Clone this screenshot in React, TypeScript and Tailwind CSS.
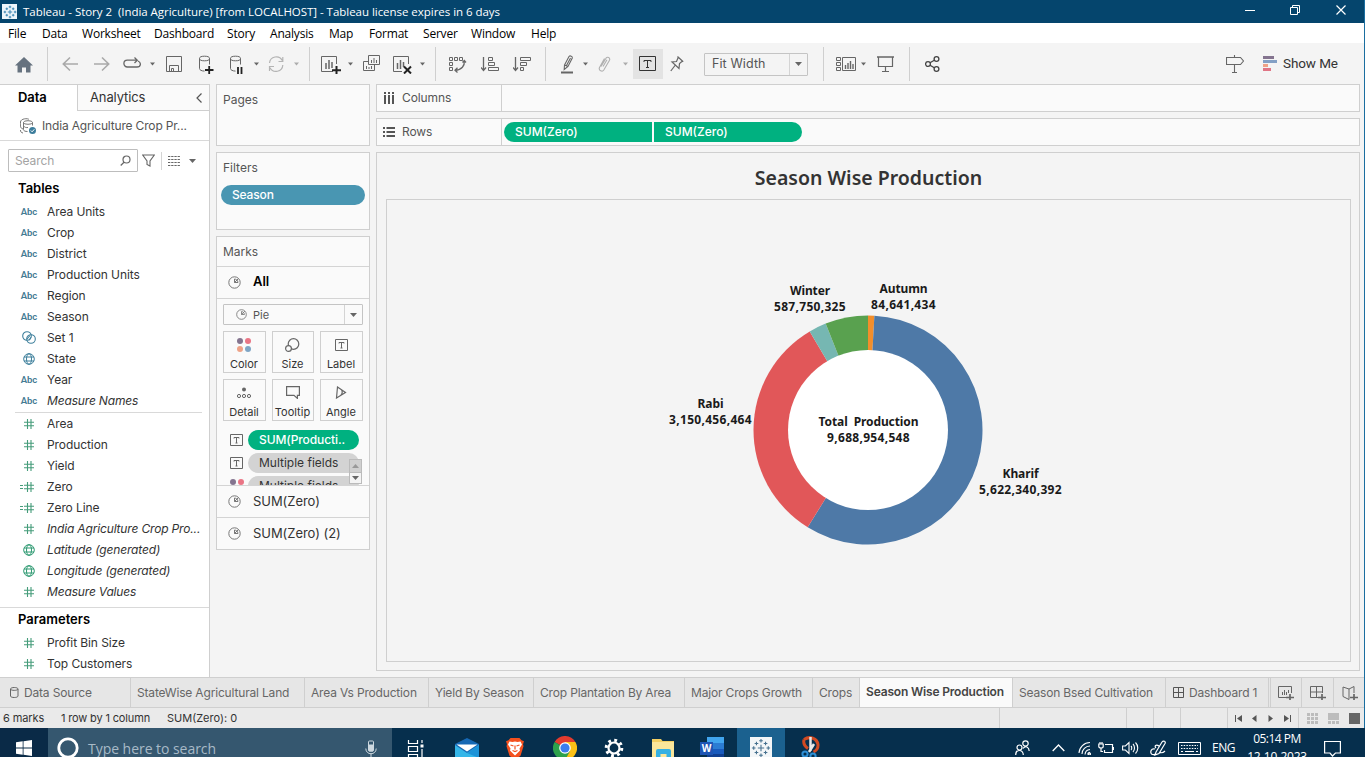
import React from "react";

type IconProps = { w: number; h?: number; className?: string; sw?: number; children: React.ReactNode };

function Icon({ w, h = 20, className = "", sw = 1, children }: IconProps) {
  return (
    <svg width={w} height={h} viewBox={`0 0 ${w} ${h}`} fill="none" stroke="currentColor" strokeWidth={sw} className={`block shrink-0 ${className}`}>
      {children}
    </svg>
  );
}

function Caret({ className = "" }: { className?: string }) {
  return (
    <Icon w={5} h={4} className={`text-[#666] ${className}`}>
      <path d="M0 .5h5L2.5 3.5z" fill="currentColor" stroke="none" />
    </Icon>
  );
}

function BigCaret() {
  return (
    <Icon w={7} h={4} className="text-[#666]">
      <path d="M0 0h7L3.5 4z" fill="currentColor" stroke="none" />
    </Icon>
  );
}

function Sep({ className = "" }: { className?: string }) {
  return <div className={`h-[34px] w-px shrink-0 bg-[#cfcfcf] ${className}`} />;
}

function TableauMark({ color, size, sw = 1.4 }: { color: string; size: number; sw?: number }) {
  return (
    <svg width={size} height={size} viewBox="0 0 22 22" fill="none" stroke={color} strokeWidth={sw} className="block shrink-0">
      <path d="M11 7.500v7M7.500 11h7M11 1v4M9 3h4M11 17v4M9 19h4M3 9v4M1 11h4M19 9v4M17 11h4M6 4v4M4 6h4M16 4v4M14 6h4M6 14v4M4 16h4M16 14v4M14 16h4" />
    </svg>
  );
}

function TitleBar() {
  return (
    <header className="flex h-[23px] items-center bg-[#05456d] pl-[2px] text-white">
      <div className="flex size-[15px] items-center justify-center bg-[#eef6fb]">
        <TableauMark color="#2f7fae" size={14} />
      </div>
      <span className="ml-[6px] whitespace-pre font-['Open_Sans',sans-serif] text-[11.500px] tracking-[-0.035px]">
        Tableau - Story 2  (India Agriculture) [from LOCALHOST] - Tableau license expires in 6 days
      </span>
      <div className="ml-auto flex items-center pb-[3px] pr-[19px]">
        <Icon w={10} h={10}><path d="M0 5.500h10" /></Icon>
        <Icon w={10} h={10} className="ml-[35px]"><path d="M.5 2.500h7v7h-7zM2.500 2.500v-2h7v7h-2" /></Icon>
        <Icon w={10} h={10} className="ml-[36px]" sw={1.2}><path d="M.5.5l9 9M9.500.5l-9 9" /></Icon>
      </div>
    </header>
  );
}

const menu: [string, string][] = [
  ["File", "w-[34px]"], ["Data", "w-[40px]"], ["Worksheet", "w-[72px]"], ["Dashboard", "w-[73px]"], ["Story", "w-[43px]"],
  ["Analysis", "w-[59px]"], ["Map", "w-[40px]"], ["Format", "w-[54px]"], ["Server", "w-[48px]"], ["Window", "w-[60px]"], ["Help", "w-[40px]"],
];

function MenuBar() {
  return (
    <nav className="flex h-[20px] items-center bg-white pl-[8px] pt-[2px] font-['Open_Sans',sans-serif] text-[12px] tracking-[-0.2px] text-black">
      {menu.map(([label, w]) => (
        <span key={label} className={`shrink-0 ${w}`}>{label}</span>
      ))}
    </nav>
  );
}

function Toolbar() {
  return (
    <div className="flex h-[41px] items-center pt-px text-[#666]">
      <Icon w={18} className="ml-[15px] text-[#66727f]">
        <path d="M9 3l9 8.500h-2.500V18.500h-4.500v-5h-4v5H2.500v-7H0z" fill="currentColor" stroke="none" />
      </Icon>
      <Sep className="ml-[14px]" />
      <Icon w={16} className="ml-[14px] text-[#a9a9a9]" sw={1.6}><path d="M16 10H1M8 3.500L1.300 10 8 16.500" /></Icon>
      <Icon w={16} className="ml-[16px] text-[#a9a9a9]" sw={1.6}><path d="M0 10h15M8 3.500l6.700 6.500L8 16.500" /></Icon>
      <Icon w={18} className="ml-[13px]" sw={1.3}>
        <path d="M10 13H4.300a3.400 3.400 0 0 1 0-6.800H14M11.500 3.500L14.300 6.200 11.500 9M15 7c3.500 1.500 3 6-1 6h-4" />
      </Icon>
      <Caret className="ml-[9px]" />
      <Icon w={16} className="ml-[11px]"><path d="M.5 2.500h15v15H.5zM3.500 17.500v-6h9v6M5.500 17.500v-3h2v3" /></Icon>
      <Icon w={15} className="ml-[17px]">
        <ellipse cx="5.500" cy="4.500" rx="5" ry="2.300" /><path d="M.5 4.500v10c0 1.500 2 2.500 5 2.600M10.500 4.500v6" />
        <path d="M6 16h8.500M10.200 12v8" stroke="#222" strokeWidth="1.800" />
      </Icon>
      <Icon w={14} className="ml-[16px]">
        <ellipse cx="5.500" cy="4.500" rx="5" ry="2.300" /><path d="M.5 4.500v10c0 1.500 2 2.500 5 2.600M10.500 4.500v6" />
        <path d="M8 13v7M11.500 13v7" stroke="#222" strokeWidth="1.800" />
      </Icon>
      <Caret className="ml-[10px]" />
      <Icon w={18} className="ml-[8px] text-[#b4b4b4]" sw={1.2}>
        <path d="M2.500 9a6.800 6.800 0 0 1 12.800-2.500M15.800 11A6.800 6.800 0 0 1 3 13.800M11.500 7.500h4.300V3M7 12.500H2.500V17" />
      </Icon>
      <Caret className="ml-[9px] opacity-50" />
      <Sep className="ml-[10px]" />
      <Icon w={20} className="ml-[11px]">
        <path d="M15.500 10V2.500H.5v15H12" /><path d="M5 9v6M8 6v9M11 8v6" strokeWidth="1.500" />
        <path d="M11 16.200h9M15.500 12v8" stroke="#222" strokeWidth="2" />
      </Icon>
      <Caret className="ml-[7px]" />
      <Icon w={17} className="ml-[10px]">
        <path d="M5.500 1.500h11v9h-11zM5 7.500H.5v9h11v-5.500" /><path d="M8.500 6v3M11 4v5M13.500 6v3M3.500 12v3M6 13v2M8.500 12v3" />
      </Icon>
      <Icon w={20} className="ml-[13px]">
        <path d="M15.500 10V2.500H.5v15H9" /><path d="M4.500 9v6M7.500 6v9M10.500 8v5" strokeWidth="1.500" />
        <path d="M11 12.500l7 7M18 12.500l-7 7" stroke="#222" strokeWidth="2" />
      </Icon>
      <Caret className="ml-[7px]" />
      <Sep className="ml-[10px]" />
      <Icon w={18} className="ml-[13px]">
        <path d="M.5 3.500h3v3h-3zM5.500 3.500h3v3h-3zM10.500 3.500h3v3h-3zM.5 8.500h3v3h-3zM.5 13.500h3v3h-3z" />
        <path d="M13.500 8.500l1.800-2 1.700 2M15.300 7c.5 4.500-2.500 9-9 9.200M8.500 13.800L6 16.200l2.500 2.300" strokeWidth="1.300" />
      </Icon>
      <Icon w={18} className="ml-[14px]">
        <path d="M2.500 3v13M0 13.500l2.500 3 2.500-3" strokeWidth="1.300" />
        <path d="M7.500 3.500h4v3h-4zM7.500 8.500h6v3h-6zM7.500 13.500h10v3h-10z" />
      </Icon>
      <Icon w={18} className="ml-[14px]">
        <path d="M2.500 3v13M0 13.500l2.500 3 2.500-3" strokeWidth="1.300" />
        <path d="M7.500 3.500h10v3h-10zM7.500 8.500h6v3h-6zM7.500 13.500h3v3h-3z" />
      </Icon>
      <Sep className="ml-[14px]" />
      <Icon w={14} className="ml-[15px]">
        <path d="M3.500 11L8 2.500c1-1.200 3.800-.2 3.300 1.500L7 12.500l-3.800 3zM3.500 11l3.500 1.500M5.500 11.500L9.500 4" strokeWidth="1.100" />
        <path d="M0 18.500h12" strokeWidth="2" />
      </Icon>
      <Caret className="ml-[8px]" />
      <Icon w={13} className="ml-[10px] text-[#b0b0b0]">
        <path d="M3 12.500l5-8.300c1.500-2 4.500-.3 3.500 2L5.800 16c-1.500 2.300-5.500.5-4.300-2.500L6.500 4.500M5 12.500l4-6.800" strokeWidth="1.100" />
      </Icon>
      <Caret className="ml-[12px] opacity-50" />
      <div className="ml-[5px] flex size-[30px] items-center justify-center bg-[#e3e3e3] pr-px">
        <Icon w={17} className="text-[#333]"><path d="M.5 2.500h16v14H.5z" /><path d="M5 8V6.500h7V8M8.500 6.500v7M7 13.500h3" /></Icon>
      </div>
      <Icon w={14} className="ml-[7px]" sw={1.2}>
        <path d="M7.500 2.500l5.700 5.200M8.300 3.200L6.500 7.500 2 8l7 6.500.5-5 3-2.500M5 11.500L.8 17" />
      </Icon>
      <div className="ml-[20px] flex h-[23px] w-[104px] shrink-0 items-center rounded-[1px] border border-[#c4c4c4]">
        <span className="w-[84px] pl-[7px] font-['Inter','Open_Sans',sans-serif] text-[12.500px] tracking-[0.1px] text-[#555]">Fit Width</span>
        <div className="flex h-full w-[18px] items-center justify-center border-l border-[#d4d4d4]"><BigCaret /></div>
      </div>
      <Sep className="ml-[15px]" />
      <Icon w={20} className="ml-[12px]">
        <path d="M.5 3.500h4v3h-4zM.5 8.500h4v3h-4zM.5 13.500h4v3h-4zM6.500 3.500h13v13h-13z" />
        <path d="M9.500 11v4M12 9v6M14.500 7v8M17 10v5" strokeWidth="1.400" />
      </Icon>
      <Caret className="ml-[5px]" />
      <Icon w={17} className="ml-[11px]"><path d="M0 3h17" strokeWidth="1.500" /><path d="M1.500 3v9.500h14V3M8.500 12.500v5M5 17.500h7" strokeWidth="1.200" /></Icon>
      <Sep className="ml-[15px]" />
      <Icon w={15} className="ml-[15px] text-[#444]" sw={1.3}>
        <circle cx="3" cy="10" r="2.400" /><circle cx="11.500" cy="5" r="2.400" /><circle cx="11.500" cy="15" r="2.400" /><path d="M5 8.800L9.300 6.200M5 11.200l4.300 2.600" />
      </Icon>
      <Icon w={18} className="ml-[286px]" sw={1.1}><path d="M8.500 1v2M.5 3.500h14l3 3.500-3 3.500H.5zM8.500 10.500v8M6 18.500h5" /></Icon>
      <Icon w={14} className="ml-[19px]">
        <g stroke="none"><path d="M0 2h11v3H0z" fill="#84748f" /><path d="M0 6h14v3H0z" fill="#83a0c5" /><path d="M0 10h5v3H0z" fill="#eea287" /><path d="M0 14h8v3H0z" fill="#e07585" /></g>
      </Icon>
      <span className="ml-[6px] whitespace-nowrap pb-[2px] font-['Roboto',sans-serif] text-[13.500px] tracking-[-0.1px] text-[#333]">Show Me</span>
    </div>
  );
}

type Kind = "abc" | "set" | "geo" | "num" | "calc";

function FieldIcon({ kind, green }: { kind: Kind; green?: boolean }) {
  const color = green ? "text-[#2f9a72]" : "text-[#3d7f9b]";
  if (kind === "abc") return <span className="pt-px font-['Roboto',sans-serif] text-[9.500px] font-semibold tracking-[-0.1px] text-[#447a93]">Abc</span>;
  if (kind === "set") return <Icon w={14} h={13} className={color} sw={1.1}><circle cx="5" cy="5" r="4.300" /><circle cx="9" cy="8" r="4.300" /><path d="M5 8l3-3.500M7 9.300l2-3" /></Icon>;
  if (kind === "geo") return <Icon w={12} h={12} className={color}><circle cx="6" cy="6" r="5.300" /><ellipse cx="6" cy="6" rx="2.500" ry="5.300" /><path d="M1 4h10M1 8h10" /></Icon>;
  return (
    <div className="relative">
      <Icon w={10} h={10} className="text-[#459c7a]" sw={1.1}><path d="M3.500 0v10M7 0v10M0 3.200h10M0 6.800h10" /></Icon>
      {kind === "calc" && <Icon w={3} h={4} className="absolute -left-[4px] top-[3px] text-[#459c7a]"><path d="M0 .5h3M0 3.500h3" /></Icon>}
    </div>
  );
}

function FieldRow({ kind, label, italic, green }: { kind: Kind; label: string; italic?: boolean; green?: boolean }) {
  return (
    <li className="flex h-[21px] items-center">
      <div className="flex w-[20px] shrink-0 justify-center"><FieldIcon kind={kind} green={green} /></div>
      <span className={`ml-[8px] whitespace-nowrap text-[12px] text-[#333] ${italic ? "italic tracking-[-0.16px]" : "tracking-[-0.08px]"}`}>{label}</span>
    </li>
  );
}

function DataPane() {
  return (
    <aside className="flex w-[210px] shrink-0 flex-col border-r border-t border-[#cfcfcf] bg-white">
      <div className="flex h-[26px] shrink-0">
        <div className="flex w-[77px] items-center pl-[18px] text-[13px] font-semibold tracking-[-0.1px] text-black">Data</div>
        <div className="flex flex-1 items-center border-b border-l border-[#cfcfcf] bg-[#fafafa] pl-[12px] text-[13px] tracking-[-0.12px] text-[#333]">
          Analytics
          <Icon w={6} h={10} className="ml-auto mr-[7px] text-[#555]" sw={1.2}><path d="M5.500.5L1 5l4.500 4.500" /></Icon>
        </div>
      </div>
      <div className="flex h-[30px] shrink-0 items-center border-b border-[#d9d9d9] pl-[20px]">
        <Icon w={16} h={16} className="text-[#777]">
          <path d="M3 11c-3-1-2.500-2.500-2.500-7C.5.500 8 0 9 1.500M3 15c-2-.5-2.500-1-2.500-3" /><ellipse cx="8" cy="4.500" rx="4.500" ry="1.800" /><path d="M3.500 4.500v7c0 1.500 2 2 4 2M12.500 4.500v3M3.500 8c1 1.500 3 1.800 4.500 1.500" />
          <circle cx="12.500" cy="12.500" r="3.500" fill="#3c7d9c" stroke="none" /><path d="M10.800 12.500l1.300 1.300 2.200-2.500" stroke="#fff" />
        </Icon>
        <span className="ml-[6px] text-[12px] tracking-[-0.17px] text-[#555]">India Agriculture Crop Pr...</span>
      </div>
      <div className="mt-[8px] flex h-[23px] shrink-0 items-center pl-[8px] text-[#666]">
        <div className="flex h-[23px] w-[130px] items-center justify-between rounded-[1px] border border-[#bdbdbd] pl-[6px] pr-[6px]">
          <span className="text-[12px] tracking-[-0.1px] text-[#a3a3a3]">Search</span>
          <Icon w={11} h={11} sw={1.200}><circle cx="6.500" cy="4.500" r="3.500" /><path d="M4 7.300L.7 10.500" /></Icon>
        </div>
        <Icon w={13} h={13} className="ml-[4px]" sw={1.1}><path d="M.7 1h11.600L8 7v5L5 10.500V7z" /></Icon>
        <div className="ml-[6px] h-[18px] w-px bg-[#d4d4d4]" />
        <Icon w={12} h={10} className="ml-[6px]"><path d="M0 .5h12M0 3.500h12M0 6.500h12M0 9.500h12" strokeDasharray="2.300 .9" /></Icon>
        <div className="ml-[9px]"><BigCaret /></div>
      </div>
      <h2 className="mt-[7px] pl-[18px] text-[13px] font-semibold leading-[19px] text-black">Tables</h2>
      <ul className="mt-[3px] pl-[19px]">
        <FieldRow kind="abc" label="Area Units" />
        <FieldRow kind="abc" label="Crop" />
        <FieldRow kind="abc" label="District" />
        <FieldRow kind="abc" label="Production Units" />
        <FieldRow kind="abc" label="Region" />
        <FieldRow kind="abc" label="Season" />
        <FieldRow kind="set" label="Set 1" />
        <FieldRow kind="geo" label="State" />
        <FieldRow kind="abc" label="Year" />
        <FieldRow kind="abc" label="Measure Names" italic />
      </ul>
      <div className="mx-[15px] mr-[7px] mt-px h-px shrink-0 bg-[#d9d9d9]" />
      <ul className="pl-[19px]">
        <FieldRow kind="num" label="Area" />
        <FieldRow kind="num" label="Production" />
        <FieldRow kind="num" label="Yield" />
        <FieldRow kind="calc" label="Zero" />
        <FieldRow kind="calc" label="Zero Line" />
        <FieldRow kind="num" label="India Agriculture Crop Pro..." italic />
        <FieldRow kind="geo" label="Latitude (generated)" italic green />
        <FieldRow kind="geo" label="Longitude (generated)" italic green />
        <FieldRow kind="num" label="Measure Values" italic />
      </ul>
      <div className="mt-[5px] h-px shrink-0 bg-[#d9d9d9]" />
      <h2 className="mt-[2px] pl-[18px] text-[13px] font-semibold leading-[19px] text-black">Parameters</h2>
      <ul className="mt-[3px] pl-[19px]">
        <FieldRow kind="num" label="Profit Bin Size" />
        <FieldRow kind="num" label="Top Customers" />
      </ul>
    </aside>
  );
}

function PieIcon({ size = 13 }: { size?: number }) {
  return (
    <svg width={size} height={size} viewBox="0 0 13 13" fill="none" stroke="#777" strokeWidth="1" className="block shrink-0">
      <circle cx="6.500" cy="6.500" r="5.700" /><path d="M6.500 3v3.500H10M6.500 6.500L10.500 2.500M6.500 3c1.800 0 3.300 1.500 3.500 3.500" />
    </svg>
  );
}

function TextIcon() {
  return <Icon w={13} h={12} className="text-[#666]"><path d="M.5.5h12v11H.5zM4 4.500V3.500h5v1M6.500 3.500v5.500M5.500 9h2" /></Icon>;
}

function MarkButton({ label, children }: { label: string; children: React.ReactNode }) {
  return (
    <div className="flex h-[42px] flex-col items-center border border-[#cfcfcf] pr-px pt-[4px]">
      <div className="flex h-[17px] items-center justify-center text-[#666]">{children}</div>
      <span className="mt-[4px] text-[11px] leading-[14px] text-[#333]">{label}</span>
    </div>
  );
}

function ColorDots() {
  return (
    <Icon w={14} h={14}>
      <g stroke="none"><circle cx="3" cy="3" r="3" fill="#84748f" /><circle cx="11" cy="3" r="3" fill="#ea7585" /><circle cx="3" cy="11" r="3" fill="#eea287" /><circle cx="11" cy="11" r="3" fill="#7fa5c5" /></g>
    </Icon>
  );
}

function BigCaretUp() {
  return <Icon w={7} h={4} className="text-[#999]"><path d="M0 4h7L3.500 0z" fill="currentColor" stroke="none" /></Icon>;
}

function Cards() {
  return (
    <section className="ml-[6px] flex w-[154px] shrink-0 flex-col gap-[6px] text-[12px] text-[#555]">
      <div className="h-[62px] border border-[#cfcfcf] bg-[#fafafa] pl-[6px] pt-[6px] leading-[17px]">Pages</div>
      <div className="h-[78px] border border-[#cfcfcf] bg-[#fafafa] px-[4px] pt-[6px] leading-[18px]">
        <div className="pl-[2px]">Filters</div>
        <div className="mt-[8px] flex h-[20px] items-center rounded-full bg-[#4996b2] pl-[11px] font-medium tracking-[-0.15px] text-white">Season</div>
      </div>
      <div className="flex h-[314px] flex-col border border-[#cfcfcf] bg-[#fafafa]">
        <div className="h-[30px] border-b border-[#d4d4d4] pl-[6px] pt-[6px] leading-[17px]">Marks</div>
        <div className="flex h-[32px] items-center border-b border-[#d4d4d4] pb-px pl-[11px] text-[13px] font-semibold text-black"><PieIcon /><span className="ml-[12px]">All</span></div>
        <div className="ml-[6px] mt-[5px] flex h-[21px] w-[140px] shrink-0 items-center rounded-[1px] border border-[#c4c4c4]">
          <div className="ml-[12px]"><PieIcon size={11} /></div>
          <span className="ml-[6px] pt-px text-[11px]">Pie</span>
          <div className="ml-auto flex h-full w-[18px] items-center justify-center border-l border-[#d4d4d4]"><BigCaret /></div>
        </div>
        <div className="ml-[6px] mt-[6px] grid w-[140px] grid-cols-[43px_42px_43px] gap-x-[6px] gap-y-[6px]">
          <MarkButton label="Color"><ColorDots /></MarkButton>
          <MarkButton label="Size"><Icon w={15} h={14} sw={1.2}><circle cx="8.500" cy="6" r="5.300" /><circle cx="3.500" cy="10.500" r="2.900" fill="#fafafa" /></Icon></MarkButton>
          <MarkButton label="Label"><TextIcon /></MarkButton>
          <MarkButton label="Detail"><Icon w={14} h={12}><circle cx="7" cy="2.500" r="2" fill="currentColor" stroke="none" /><circle cx="2" cy="9" r="1.600" /><circle cx="7" cy="9" r="1.600" /><circle cx="12" cy="9" r="1.600" /></Icon></MarkButton>
          <MarkButton label="Tooltip"><Icon w={14} h={13} sw={1.2}><path d="M.6.6h12.800v8.800h-2v3L8 9.400H.6z" /></Icon></MarkButton>
          <MarkButton label="Angle"><Icon w={12} h={13} sw={1.2}><path d="M2.500 1l8 5.500L1.500 12zM6.500 3.800c1 1.800.8 3.800-.5 5.200" /></Icon></MarkButton>
        </div>
        <div className="relative mt-[8px] flex h-[56px] shrink-0 flex-col gap-[3px] overflow-hidden pl-[13px] pt-px">
          <div className="flex h-[20px] shrink-0 items-center"><TextIcon /><div className="ml-[5px] flex h-[20px] w-[111px] items-center rounded-full bg-[#00b180] pl-[11px] font-medium tracking-[-0.1px] text-white">SUM(Producti..</div></div>
          <div className="flex h-[20px] shrink-0 items-center"><TextIcon /><div className="ml-[5px] flex h-[20px] w-[111px] items-center rounded-full bg-[#d3d3d3] pl-[11px] text-[#333]">Multiple fields</div></div>
          <div className="flex h-[20px] shrink-0 items-center"><div className="w-[13px]"><ColorDots /></div><div className="ml-[5px] flex h-[20px] w-[111px] items-center rounded-full bg-[#d3d3d3] pl-[11px] text-[#333]">Multiple fields</div></div>
          <div className="absolute bottom-px right-[7px] flex h-[25px] w-[13px] flex-col border border-[#bbb]">
            <div className="flex h-[12px] items-center justify-center bg-[#d0d0d0]"><BigCaretUp /></div>
            <div className="flex h-[11px] flex-1 items-center justify-center border-t border-[#bbb] bg-[#f4f4f4]"><BigCaret /></div>
          </div>
        </div>
        <div className="flex h-[32px] shrink-0 items-center border-t border-[#d4d4d4] pl-[11px] text-[13px] tracking-[-0.05px] text-[#333]"><PieIcon /><span className="ml-[12px]">SUM(Zero)</span></div>
        <div className="flex h-[32px] shrink-0 items-center border-t border-[#d4d4d4] pl-[11px] text-[13px] tracking-[-0.05px] text-[#333]"><PieIcon /><span className="ml-[12px]">SUM(Zero) (2)</span></div>
      </div>
    </section>
  );
}

const CX = 481;
const CY = 230;

const slices = [
  { from: 0, to: 3.2, color: "#f28e2b" },
  { from: 3.2, to: 211.8, color: "#4e79a7" },
  { from: 211.8, to: 329.4, color: "#e15759" },
  { from: 329.4, to: 338.3, color: "#76b7b2" },
  { from: 338.3, to: 360, color: "#59a14f" },
];

function wedge(from: number, to: number, r: number) {
  const p = (a: number) => `${CX + r * Math.sin((a * Math.PI) / 180)} ${CY - r * Math.cos((a * Math.PI) / 180)}`;
  return `M${CX} ${CY}L${p(from)}A${r} ${r} 0 ${to - from > 180 ? 1 : 0} 1 ${p(to)}Z`;
}

const labels: [string, string, number, number][] = [
  ["Winter", "587,750,325", 423, 95],
  ["Autumn", "84,641,434", 516.5, 93],
  ["Rabi", "3,150,456,464", 323.5, 208],
  ["Total\u00a0 Production", "9,688,954,548", 481.5, 226],
  ["Kharif", "5,622,340,392", 633.5, 278],
];

function Chart() {
  return (
    <svg width="963" height="461" viewBox="0 0 963 461" className="block">
      {slices.map((s) => <path key={s.color} d={wedge(s.from, s.to, 114.5)} fill={s.color} />)}
      <circle cx={CX} cy={CY} r="80" fill="#fff" />
      <g className="font-['Noto_Sans',sans-serif] text-[12px] font-bold" fill="#1a1a1a" textAnchor="middle">
        {labels.map(([name, value, x, y]) => (
          <React.Fragment key={name}>
            <text x={x} y={y} className="tracking-[-0.1px]">{name}</text>
            <text x={x} y={y + 16} className="tracking-[0.3px]">{value}</text>
          </React.Fragment>
        ))}
      </g>
    </svg>
  );
}

function Workspace() {
  return (
    <main className="ml-[6px] flex w-[984px] shrink-0 flex-col text-[12px] text-[#555]">
      <div className="flex h-[28px] border border-[#cfcfcf] bg-[#fafafa]">
        <div className="flex w-[125px] items-center border-r border-[#cfcfcf] pl-[7px]">
          <Icon w={11} h={12} className="text-[#555]" sw={2}><path d="M1 0v2M5 0v2M9 0v2M1 3v9M5 3v9M9 3v9" /></Icon>
          <span className="ml-[7px] tracking-[-0.1px]">Columns</span>
        </div>
      </div>
      <div className="mt-[6px] flex h-[28px] border border-[#cfcfcf] bg-[#fafafa]">
        <div className="flex w-[125px] items-center border-r border-[#cfcfcf] pl-[6px]">
          <Icon w={12} h={11} className="text-[#555]" sw={2}><path d="M0 1h2M0 5h2M0 9h2M3.500 1H12M3.500 5H12M3.500 9H12" /></Icon>
          <span className="ml-[7px] tracking-[-0.1px]">Rows</span>
        </div>
        <div className="ml-[2px] flex items-center gap-[2px] font-medium text-white">
          <div className="flex h-[20px] w-[148px] items-center rounded-l-full bg-[#00b180] pl-[11px]">SUM(Zero)</div>
          <div className="flex h-[20px] w-[148px] items-center rounded-r-full bg-[#00b180] pl-[11px]">SUM(Zero)</div>
        </div>
      </div>
      <div className="mt-[6px] flex h-[519px] flex-col border border-[#cfcfcf] pl-[9px] pr-[8px]">
        <h1 className="h-[46px] pt-[10px] text-center font-['Noto_Sans',sans-serif] text-[19.500px] font-semibold leading-[30px] text-[#333]">Season Wise Production</h1>
        <div className="h-[463px] border border-[#cfcfcf]"><Chart /></div>
      </div>
    </main>
  );
}

const sheets: { label: string; w: string; active?: boolean }[] = [
  { label: "StateWise Agricultural Land", w: "w-[174px]" },
  { label: "Area Vs Production", w: "w-[124px]" },
  { label: "Yield By Season", w: "w-[105px]" },
  { label: "Crop Plantation By Area", w: "w-[151px]" },
  { label: "Major Crops Growth", w: "w-[128px]" },
  { label: "Crops", w: "w-[47px]" },
  { label: "Season Wise Production", w: "w-[153px]", active: true },
  { label: "Season Bsed Cultivation", w: "w-[153px]" },
];

function SheetTabs() {
  return (
    <div className="flex h-[31px] shrink-0 border-y border-[#cfcfcf] bg-[#e6e6e6] text-[12px] tracking-[-0.17px] text-[#666]">
      <div className="flex w-[131px] shrink-0 items-center border-r border-[#cfcfcf] pl-[10px]">
        <Icon w={9} h={11}><path d="M.5 2v7c0 2 7.500 2 7.500 0V2C8 0 .5 0 .5 2zM.5 2c0 1.800 7.500 1.800 7.500 0" /></Icon>
        <span className="ml-[5px]">Data Source</span>
      </div>
      {sheets.map((s) => (
        <div key={s.label} className={`flex shrink-0 items-center whitespace-nowrap border-r border-[#cfcfcf] pl-[6px] ${s.w} ${s.active ? "bg-[#fafafa] pb-[2px] font-semibold text-[#444]" : ""}`}>{s.label}</div>
      ))}
      <div className="flex w-[103px] shrink-0 items-center border-r border-[#cfcfcf] pl-[7px]">
        <Icon w={11} h={11} className="text-[#555]"><path d="M.5.5h10v10H.5zM5.500.5v10M.5 5.500h10" /></Icon>
        <span className="ml-[5px]">Dashboard 1</span>
      </div>
      <div className="ml-px flex w-[32px] items-center justify-center border-x border-[#cfcfcf]">
        <Icon w={16} h={14}><path d="M13.500 7V.5H.5v11h8M4.500 6v3M6.500 4v5M8.500 6v3M10.500 4v3" /><path d="M8 11.500h8M12 8v6.500" strokeWidth="1.700" /></Icon>
      </div>
      <div className="flex w-[32px] items-center justify-center border-r border-[#cfcfcf]">
        <Icon w={16} h={14}><path d="M12.500 7V.5H.5v11h8M6.500.5v11M.5 6h12" /><path d="M8 11.500h8M12 8v6.500" strokeWidth="1.700" /></Icon>
      </div>
      <div className="flex flex-1 items-center justify-center">
        <Icon w={16} h={14}><path d="M7 13.500l-6-3V1l6 2 5-2.500V7M7 3v10.500" /><path d="M8 11.500h8M12 8v6.500" strokeWidth="1.700" /></Icon>
      </div>
    </div>
  );
}

function StatusBar() {
  return (
    <div className="flex h-[20px] shrink-0 items-center bg-[#eaeaea] pl-[3px] text-[11px] text-[#333]">
      <span className="w-[58px] tracking-[-0.1px]">6 marks</span>
      <span className="w-[106px] tracking-[-0.15px]">1 row by 1 column</span>
      <span>SUM(Zero): 0</span>
      <div className="ml-auto flex h-full shrink-0 text-[#555]">
        <div className="w-[127px] border-l border-[#cfcfcf]" />
        <div className="w-[27px] border-l border-[#cfcfcf]" />
        <div className="w-[27px] border-l border-[#cfcfcf]" />
        <div className="w-[47px] border-l border-[#cfcfcf]" />
        <div className="flex w-[71px] items-center gap-[10px] border-l border-[#cfcfcf] pl-[7px]">
          <Icon w={7} h={7}><path d="M.5 0v7" /><path d="M7 0v7L2 3.500z" fill="currentColor" stroke="none" /></Icon>
          <Icon w={5} h={7}><path d="M4.500 0v7L0 3.500z" fill="currentColor" stroke="none" /></Icon>
          <Icon w={5} h={7} className="ml-px"><path d="M.5 0v7L5 3.500z" fill="currentColor" stroke="none" /></Icon>
          <Icon w={7} h={7} className="ml-px"><path d="M6.500 0v7" /><path d="M0 0v7L5 3.500z" fill="currentColor" stroke="none" /></Icon>
        </div>
        <div className="flex w-[67px] items-center gap-[10px] border-l border-[#cfcfcf] pl-[8px]">
          <Icon w={11} h={11} className="text-[#bcbcbc]"><path d="M0 1.500h11M0 5.500h11M0 9.500h11" strokeWidth="3" strokeDasharray="3 1" /></Icon>
          <Icon w={11} h={11} className="text-[#bcbcbc]"><path d="M0 3.500h11" strokeWidth="7" /><path d="M0 9.500h11" strokeWidth="3" strokeDasharray="3 1" /></Icon>
          <Icon w={11} h={11} className="text-[#666]"><path d="M0 0h11v11H0z" fill="currentColor" stroke="none" /></Icon>
        </div>
      </div>
    </div>
  );
}

function Taskbar() {
  return (
    <footer className="h-[29px] shrink-0 overflow-hidden bg-[#062f4d]">
      <div className="flex h-[40px] items-center font-['Open_Sans',sans-serif] text-white">
        <div className="flex h-full w-[48px] shrink-0 items-center justify-center bg-[#0a2a47]">
          <Icon w={16} h={16}><path d="M0 2.300l6.700-1v6.300H0zM7.500 1.200L16 0v7.600H7.500zM0 8.400h6.700v6.300l-6.700-1zM7.500 8.400H16V16l-8.500-1.200z" fill="currentColor" stroke="none" /></Icon>
        </div>
        <div className="flex h-full w-[344px] shrink-0 items-center bg-[#35576f] pl-[9px]">
          <Icon w={22} h={22} sw={2.800}><circle cx="11" cy="11" r="9.200" /></Icon>
          <span className="ml-[9px] text-[14px] tracking-[-0.04px] text-[#a8bac7]">Type here to search</span>
          <Icon w={12} h={17} className="ml-auto mr-[15px] text-[#cdd8df]"><rect x="3.500" y="1" width="5" height="10" rx="1" /><path d="M4 5h4v6H4z" fill="currentColor" /><path d="M.8 8.500c0 7 10.400 7 10.400 0M6 13.500V17" /></Icon>
        </div>
        <Icon w={17} h={17} className="ml-[15px]" sw={1.2}><path d="M1.500 0v3.500h9V0M1.500 6.500h9v5h-9zM1.500 17v-2.500h9V17M15 0v3M15 9v8" /><path d="M13.500 4.500h3v3h-3z" fill="currentColor" stroke="none" /></Icon>
        <Icon w={24} h={20} className="ml-[31px]">
          <g stroke="none"><path d="M0 6l12-6 12 6v14H0z" fill="#1668b4" /><path d="M0 7l12 8L24 7v13H0z" fill="#35b6e9" /><path d="M12 15L24 7v13z" fill="#1c93d8" /><path d="M1.500 6.500h21L12 13.500z" fill="#fff" /></g>
        </Icon>
        <Icon w={20} h={23} className="ml-[26px]">
          <path d="M5.500 1h9l2 2.200 2.500 1-1 3 .5 2-3 9.500L10 23l-5.500-4.300L1.500 9.200l.5-2-1-3 2.500-1z" fill="#f4501e" stroke="none" />
          <path d="M10 4.500l2.500.5 3-.5 1.500 3-2.500 4 .5 2-5 5-5-5 .5-2L3 7.500l1.500-3 3 .5z" fill="#fff" stroke="none" /><path d="M5.500 8l3 1M14.500 8l-3 1M10 8.500v4M7.500 13.500l2.500 1 2.500-1" stroke="#f4501e" strokeWidth="1.200" />
        </Icon>
        <Icon w={24} h={24} className="ml-[28px]">
          <g stroke="none"><path d="M12 12L1.600 6A12 12 0 0 1 22.400 6z" fill="#e33b2e" /><path d="M12 12L1.600 6A12 12 0 0 0 12 24l5-8.500z" fill="#2da14c" /><path d="M12 12l5 3-5 9A12 12 0 0 0 22.400 6H12z" fill="#fbc116" /><circle cx="12" cy="12" r="5.800" fill="#fff" /><circle cx="12" cy="12" r="4.600" fill="#3b7ded" /></g>
        </Icon>
        <Icon w={20} h={20} className="ml-[27px]">
          <circle cx="10" cy="10" r="5.500" strokeWidth="2.200" /><circle cx="10" cy="10" r="7.800" strokeWidth="3" strokeDasharray="2.800 3.326" />
        </Icon>
        <Icon w={22} h={20} className="ml-[28px]">
          <g stroke="none"><path d="M0 1h9l1.500 2H22v16H0z" fill="#f3cf63" /><path d="M0 4h22v16H0z" fill="#fbe69a" /><path d="M4 20v-7q0-2 2-2h11q2 0 2 2v7h-4.500v-4h-6v4z" fill="#36b0e2" /></g>
        </Icon>
        <svg width="25" height="22" viewBox="0 0 25 22" className="ml-[26px] block shrink-0">
          <path d="M7 0h17v6H7z" fill="#41a5ee" /><path d="M7 6h17v6H7z" fill="#2b7cd3" /><path d="M7 12h17v5H7z" fill="#185abd" /><path d="M7 17h17v5H7z" fill="#103f91" /><path d="M0 5h13v13H0z" fill="#1e55b4" />
          <text x="6.500" y="15" textAnchor="middle" fill="#fff" className="font-['Open_Sans',sans-serif] text-[10px] font-bold">W</text>
        </svg>
        <div className="ml-[12px] flex h-full w-[48px] shrink-0 items-center justify-center bg-[#1b618f] pr-px">
          <div className="flex size-[22px] items-center justify-center bg-[#f3f6f8]"><TableauMark color="#46718f" size={20} sw={1.2} /></div>
        </div>
        <Icon w={20} h={24} className="ml-[16px]">
          <path d="M3 3.500c6-4 13-1 14 5 .3 4-1.500 6-4.500 7.500M3 3.500c-1 4 1 7 4 9" stroke="#d14a22" strokeWidth="3" />
          <path d="M9.500 1v14M13 8L8 16" stroke="#e8e8e8" strokeWidth="2.500" /><circle cx="4" cy="18" r="2.600" stroke="#2d8fd6" strokeWidth="2" /><circle cx="12" cy="20" r="2.600" stroke="#2d8fd6" strokeWidth="2" />
        </Icon>
        <Icon w={15} h={16} className="ml-[194px]" sw={1.2}><circle cx="10.500" cy="3.500" r="2.700" /><circle cx="4.500" cy="7.500" r="2.500" /><path d="M.7 15c0-6 7.600-6 7.600 0M8 8.500c2.500-3.500 6-1.500 6.200 2.500" /></Icon>
        <Icon w={13} h={8} className="ml-[22px]" sw={1.3}><path d="M.7 7l5.800-6 5.800 6" /></Icon>
        <Icon w={13} h={14} className="ml-[13px]" sw={1.1}><path d="M1 12A11 11 0 0 1 12 1.500M4 13A8 8 0 0 1 12 5M7 13.500A5.500 5.500 0 0 1 12 8.500M9.500 13.500c.3-1.500 1-2 2.500-2.200" /><circle cx="11.500" cy="13" r="1" /></Icon>
        <Icon w={16} h={13} className="ml-[7px]" sw={1.2}><path d="M7 2.500h7.500v8h-8V8M15.500 5v3M.8 2h4.400v2.500c0 2-4.400 2-4.400 0zM2 0v2M4 0v2M3 6.500v3h2" /></Icon>
        <Icon w={17} h={14} className="ml-[8px]" sw={1.1}><path d="M.6 5h2.800L7 1.500v11L3.400 9H.6zM9 5c1 1 1 3 0 4M11 3c2 2 2 6 0 8M13.500 1.500c3 3 3 8 0 11" /></Icon>
        <Icon w={17} h={16} className="ml-[11px]" sw={1.2}><path d="M6 12l6-10c1.500-2 4-.5 3 1.500L9 13.500 5 15zM9 6C6 4 4 6 6 8M5 9c-4-1-5 3-3.500 5 1.500 1 3.500 1 4.500-1M9 13c2-1 3 1 6-2" /></Icon>
        <Icon w={23} h={13} className="ml-[11px]"><path d="M.5.5h22v12H.5z" /><path d="M3 3.500h17M3 6.500h17" strokeDasharray="1.500 1.200" /><path d="M3 9.500h2M7 9.500h9M18 9.500h2" /></Icon>
        <span className="ml-[11px] w-[24px] text-[12px] tracking-[-0.5px]">ENG</span>
        <div className="ml-[11px] w-[60px] shrink-0 whitespace-nowrap text-center text-[12px] leading-[18px] tracking-[-0.5px]"><div>05:14 PM</div><div className="tracking-[-0.3px]">12-10-2023</div></div>
        <Icon w={17} h={17} className="ml-[17px]" sw={1.2}><path d="M.6 1.500h15.800v11.500h-5L8.500 16l-2.500-3H.6z" /></Icon>
      </div>
    </footer>
  );
}

export default function App() {
  return (
    <div className="relative flex h-[757px] w-[1365px] flex-col overflow-hidden bg-[#f4f4f4] font-['Inter','Open_Sans',sans-serif]">
      <TitleBar />
      <MenuBar />
      <Toolbar />
      <div className="flex h-[593px] shrink-0">
        <DataPane />
        <Cards />
        <Workspace />
      </div>
      <SheetTabs />
      <StatusBar />
      <Taskbar />
      <div className="absolute right-0 top-0 h-[728px] w-px bg-[#1a6ea0]" />
    </div>
  );
}
